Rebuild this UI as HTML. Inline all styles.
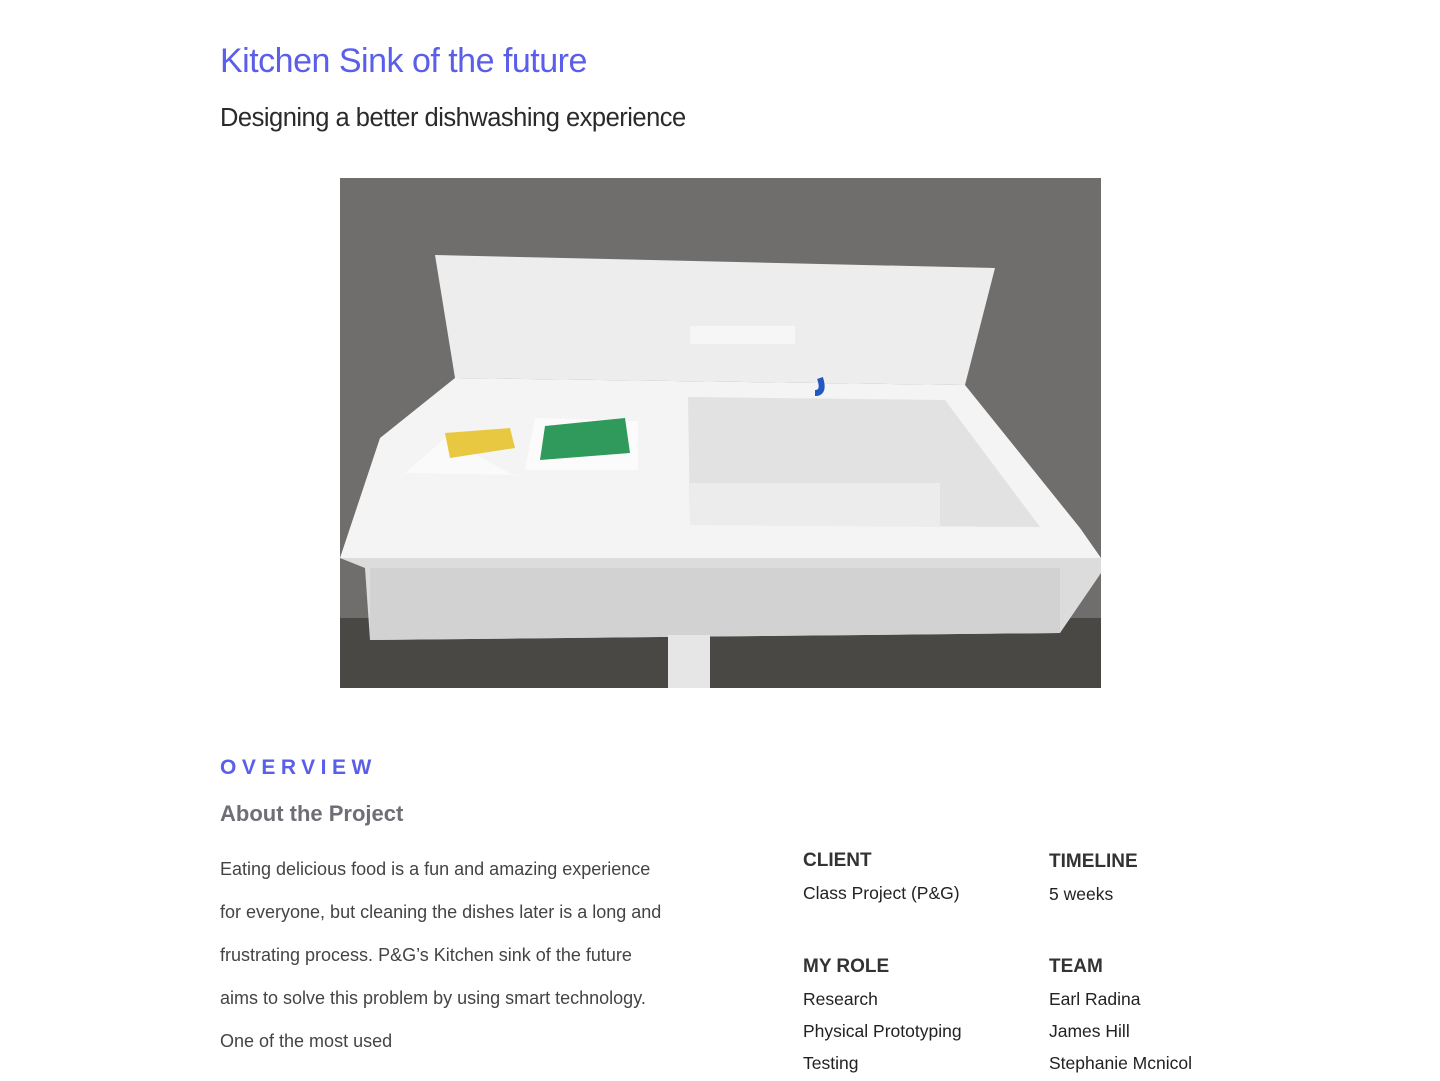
<!DOCTYPE html>
<html><head><style>
body{margin:0;background:#fff;font-family:"Liberation Sans",sans-serif;}
.w{position:relative;width:1440px;height:1081px;overflow:hidden}
h1{position:absolute;left:220px;top:42px;margin:0;font-size:34px;font-weight:normal;color:#5a5ee8;letter-spacing:-0.5px}
h2{position:absolute;left:220px;top:104px;margin:0;font-size:25.5px;font-weight:normal;color:#2a2a2a;letter-spacing:-0.5px}
.ov{position:absolute;left:220px;top:756px;font-size:21px;font-weight:bold;color:#5a5ee8;letter-spacing:5.5px}
.ab{position:absolute;left:220px;top:801px;font-size:22px;font-weight:bold;color:#6e6e76}
.p{position:absolute;left:220px;top:848px;width:560px;font-size:18px;line-height:43px;color:#444;white-space:nowrap}
.h{position:absolute;font-size:19px;font-weight:bold;color:#333}
.t{position:absolute;font-size:17.5px;color:#222;line-height:32px}
</style></head><body><div class="w">
<h1>Kitchen Sink of the future</h1>
<h2>Designing a better dishwashing experience</h2>
<svg style="position:absolute;left:340px;top:178px" width="761" height="510" viewBox="0 0 761 510">
<rect width="761" height="510" fill="#6f6e6c"/>
<rect y="440" width="761" height="70" fill="#4a4844"/>
<polygon points="95,77 655,90 625,207 115,200" fill="#ededed"/>
<polygon points="115,200 625,207 740,350 761,380 0,380 40,260" fill="#f4f4f4"/>
<polygon points="0,380 761,380 761,395 720,455 30,462 25,390" fill="#dcdcdc"/>
<polygon points="30,390 720,390 720,455 30,462" fill="#d2d2d2"/>
<polygon points="348,219 605,222 700,349 350,347" fill="#e2e2e2"/>
<polygon points="350,305 600,305 600,349 350,347" fill="#ececec"/>
<rect x="328" y="457" width="42" height="53" fill="#e6e6e6"/>
<polygon points="65,295 185,297 175,298 105,260" fill="#fafafa"/>
<polygon points="195,240 298,243 298,292 185,292" fill="#fbfbfb"/>
<polygon points="205,248 285,240 290,275 200,282" fill="#2f9a5c"/>
<polygon points="105,255 170,250 175,270 110,280" fill="#e8c840"/>
<rect x="350" y="148" width="105" height="18" fill="#f6f6f6"/>
<path d="M480,200 q5,15 -5,15" stroke="#2358c0" stroke-width="6" fill="none"/>
</svg>
<div class="ov">OVERVIEW</div>
<div class="ab">About the Project</div>
<div class="p">Eating delicious food is a fun and amazing experience<br>for everyone, but cleaning the dishes later is a long and<br>frustrating process. P&amp;G’s Kitchen sink of the future<br>aims to solve this problem by using smart technology.<br>One of the most used</div>
<div class="h" style="left:803px;top:850px">CLIENT</div>
<div class="t" style="left:803px;top:877px">Class Project (P&amp;G)</div>
<div class="h" style="left:1049px;top:851px">TIMELINE</div>
<div class="t" style="left:1049px;top:878px">5 weeks</div>
<div class="h" style="left:803px;top:956px">MY ROLE</div>
<div class="t" style="left:803px;top:983px">Research<br>Physical Prototyping<br>Testing</div>
<div class="h" style="left:1049px;top:956px">TEAM</div>
<div class="t" style="left:1049px;top:983px">Earl Radina<br>James Hill<br>Stephanie Mcnicol</div>
</div></body></html>
